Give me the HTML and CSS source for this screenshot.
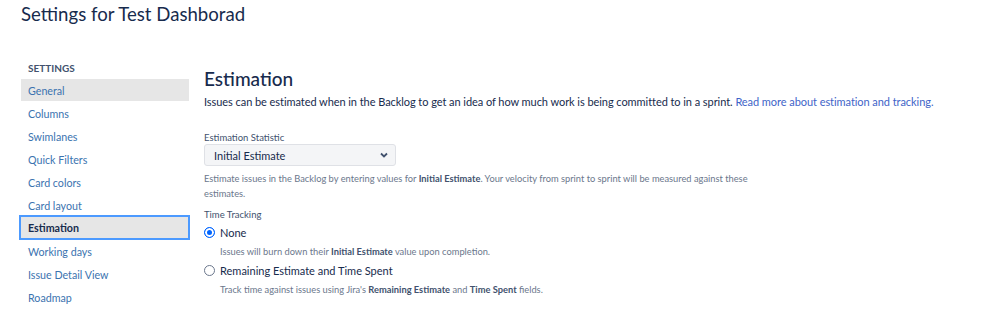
FILE: index.html
```html
<!DOCTYPE html>
<html lang="en">
<head>
    <meta charset="UTF-8">
    <title>Settings for Test Dashborad</title>
    <link rel="stylesheet" href="styles.css">
</head>
<body>
    <h1 class="page-title">Settings for Test Dashborad</h1>
    <div class="layout">
        <!-- Sidebar -->
        <nav class="sidebar">
            <h4>SETTINGS</h4>
            <ul>
                <li class="hover"><a href="#">General</a></li>
                <li><a href="#">Columns</a></li>
                <li><a href="#">Swimlanes</a></li>
                <li><a href="#">Quick Filters</a></li>
                <li><a href="#">Card colors</a></li>
                <li><a href="#">Card layout</a></li>
                <li class="selected"><a href="#">Estimation</a></li>
                <li><a href="#">Working days</a></li>
                <li><a href="#">Issue Detail View</a></li>
                <li><a href="#">Roadmap</a></li>
            </ul>
        </nav>

        <!-- Estimation -->
        <main class="content">
            <h2>Estimation</h2>
            <p class="intro">Issues can be estimated when in the Backlog to get an idea of how much work is being committed to in a sprint. <a href="#">Read more about estimation and tracking.</a></p>

            <div class="field first">
                <label for="statistic">Estimation Statistic</label>
                <div class="select">
                    <span>Initial Estimate</span>
                    <svg width="10" height="10" viewBox="0 0 10 10"><path d="M2 3.5 L5 6.5 L8 3.5" fill="none" stroke="#42526e" stroke-width="1.8"/></svg>
                </div>
                <p class="help">Estimate issues in the Backlog by entering values for <b>Initial Estimate</b>. Your velocity from sprint to sprint will be measured against these estimates.</p>
            </div>

            <div class="field">
                <label>Time Tracking</label>
                <div class="radio">
                    <span class="dot checked"></span>
                    <span>None</span>
                </div>
                <p class="help indent">Issues will burn down their <b>Initial Estimate</b> value upon completion.</p>
                <div class="radio">
                    <span class="dot"></span>
                    <span>Remaining Estimate and Time Spent</span>
                </div>
                <p class="help indent">Track time against issues using Jira's <b>Remaining Estimate</b> and <b>Time Spent</b> fields.</p>
            </div>
        </main>
    </div>
</body>
</html>
```

FILE: styles.css
```css
html, body {
    margin: 0;
    padding: 0;
}
body {
    font-family: Lato, "Open Sans", sans-serif;
    color: #172b4d;
    background: #fff;
}
.page-title {
    margin: 0;
    padding: 1px 0 0 21px;
    font-size: 18.6px;
    font-weight: 400;
    line-height: 26px;
}
.layout {
    display: flex;
    padding: 34px 0 0 20px;
}
.sidebar {
    width: 170px;
    flex-shrink: 0;
}
.sidebar h4 {
    margin: 0 0 4px 8px;
    font-size: 10px;
    font-weight: 700;
    color: #42526e;
    line-height: 14px;
}
.sidebar ul {
    list-style: none;
    margin: 0;
    padding: 0;
}
.sidebar li {
    height: 22px;
    margin: 0 0 1px 1px;
    width: 168px;
    display: flex;
    align-items: center;
}
.sidebar li a {
    color: #3b73af;
    text-decoration: none;
    font-size: 10.7px;
    padding-left: 7px;
}
.sidebar li.hover {
    background: #e6e6e6;
}
.sidebar li.selected {
    background: #e6e6e6;
    border: 2px solid #4c9aff;
    width: 167px;
    height: 21px;
    margin: -2px 0 0 -1px;
}
.sidebar li.selected a {
    color: #172b4d;
    font-weight: 700;
}
.content {
    padding: 6px 0 0 14px;
}
.content h2 {
    margin: 0;
    font-size: 19px;
    font-weight: 500;
    line-height: 24px;
}
.intro {
    margin: 1px 0 0;
    font-size: 11px;
    letter-spacing: -0.06px;
    line-height: 20px;
}
.intro a {
    color: #3e64c8;
    text-decoration: none;
}
.field {
    margin-top: 8px;
}
.field.first {
    margin-top: 20px;
}
.field label {
    display: block;
    font-size: 9.5px;
    color: #42526e;
    line-height: 12px;
}
.select {
    width: 175px;
    height: 20px;
    border: 1px solid #dfe1e6;
    border-radius: 3px;
    background: #f4f5f7;
    display: flex;
    align-items: center;
    justify-content: space-between;
    padding: 0 6px 0 9px;
    font-size: 11px;
}
.help {
    margin: 5px 0 0;
    font-size: 9.3px;
    line-height: 15px;
    color: #6b778c;
    max-width: 552px;
}
.help b {
    color: #42526e;
}
.help.indent {
    margin: 3px 0 2px 16px;
}
.radio {
    display: flex;
    align-items: center;
    gap: 5px;
    margin-top: 2px;
    font-size: 11px;
    height: 18px;
}
.dot {
    width: 9px;
    height: 9px;
    border-radius: 50%;
    border: 1px solid #6b778c;
    background: #fff;
    box-sizing: content-box;
}
.dot.checked {
    border-color: #0065ff;
    background: #0065ff;
    box-shadow: inset 0 0 0 2px #fff;
}
```
